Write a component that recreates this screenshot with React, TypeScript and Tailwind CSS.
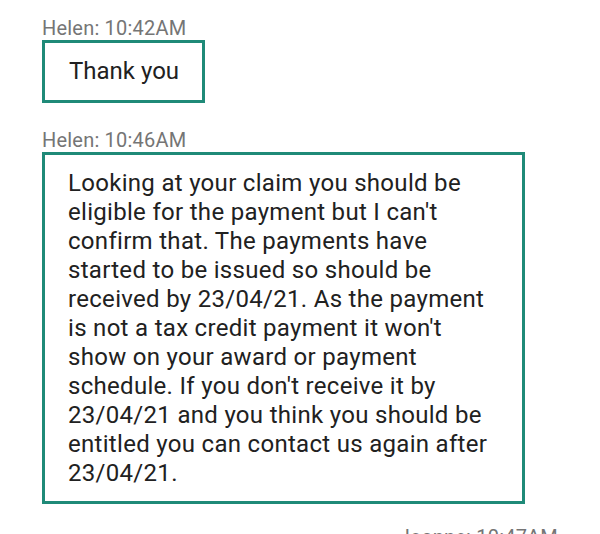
const lines = [
  "Looking at your claim you should be",
  "eligible for the payment but I can't",
  "confirm that. The payments have",
  "started to be issued so should be",
  "received by 23/04/21. As the payment",
  "is not a tax credit payment it won't",
  "show on your award or payment",
  "schedule. If you don't receive it by",
  "23/04/21 and you think you should be",
  "entitled you can contact us again after",
  "23/04/21.",
];

export default function App() {
  return (
    <div className="w-[600px] h-[534px] overflow-hidden bg-white" style={{ fontFamily: "Roboto, 'Liberation Sans', sans-serif" }}>
      <div className="flex flex-col pl-[42px] pt-[16px]">
        <div className="text-[20px] leading-[24px] tracking-[0.2px] text-[#757575]">Helen: 10:42AM</div>
        <div className="self-start border-[3px] border-[#1f8a78] w-[163px] h-[63px] pl-[24px] pt-[12px] text-[24px] leading-[32px] text-[#212121] whitespace-nowrap">Thank you</div>
        <div className="mt-[25px] text-[20px] leading-[24px] tracking-[0.2px] text-[#757575]">Helen: 10:46AM</div>
        <div className="border-[3px] border-[#1f8a78] w-[483px] h-[352px] pl-[23px] pt-[14px] text-[24px] leading-[29px] tracking-[0.3px] text-[#212121]">
          {lines.map((l, i) => (
            <div key={i} className="whitespace-nowrap">{l}</div>
          ))}
        </div>
        <div className="mt-[21px] pr-[42px] self-end text-[20px] leading-[24px] tracking-[0.2px] text-[#757575] whitespace-nowrap">Joanne: 10:47AM</div>
      </div>
    </div>
  );
}
